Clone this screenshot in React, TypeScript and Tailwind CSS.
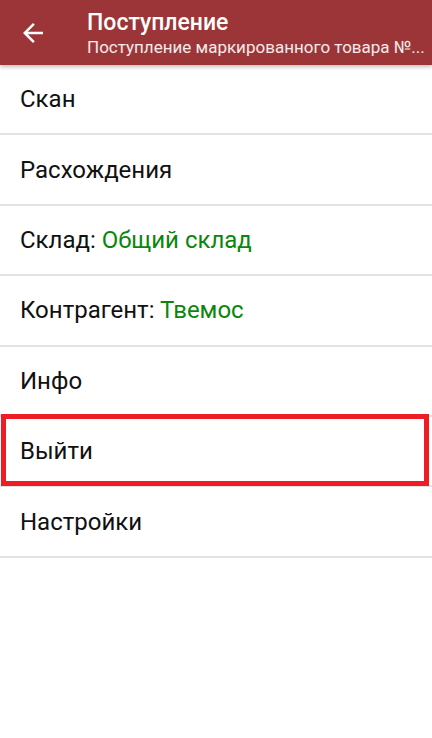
import React from 'react';

type Item = { label: string; value?: string; highlight?: boolean };

const ITEMS: Item[] = [
  { label: 'Скан' },
  { label: 'Расхождения' },
  { label: 'Склад:', value: 'Общий склад' },
  { label: 'Контрагент:', value: 'Твемос' },
  { label: 'Инфо' },
  { label: 'Выйти', highlight: true },
  { label: 'Настройки' },
];

const BackArrow = () => (
  <svg width="30" height="30" viewBox="0 0 24 24" fill="white">
    <path d="M20 11H7.83l5.59-5.59L12 4l-8 8 8 8 1.41-1.41L7.83 13H20v-2z" />
  </svg>
);

export default function App() {
  return (
    <div
      className="w-[432px] h-[738px] bg-white overflow-hidden"
      style={{ fontFamily: 'Roboto, "Noto Sans", sans-serif' }}
    >
      {/* Toolbar */}
      <div className="relative z-10 h-[65px] bg-[#9c3537] flex items-center shadow-[0_2px_4px_rgba(0,0,0,0.25)]">
        <div className="w-[87px] pl-[18px] flex items-center">
          <BackArrow />
        </div>
        <div className="flex-1 min-w-0 pr-[8px] flex flex-col pt-[1px]">
          <div className="text-white text-[23px] font-medium leading-[27px] whitespace-nowrap">Поступление</div>
          <div className="text-white/90 text-[17px] leading-[22px] whitespace-nowrap">
            Поступление маркированного товара №...
          </div>
        </div>
      </div>

      {/* Menu */}
      <div className="flex flex-col">
        {ITEMS.map((it) => (
          <div key={it.label} className="relative h-[70.4px] border-b-2 border-[#e3e3e3] flex items-center pl-[20px]">
            <span className="text-[24px] text-[#111] leading-none">
              {it.label}
              {it.value && <span className="text-[#0a870a]"> {it.value}</span>}
            </span>
            {it.highlight && (
              <div className="absolute left-[1px] right-[3px] top-[-3px] bottom-[-1px] border-[5px] border-[#ee1d25]" />
            )}
          </div>
        ))}
      </div>
    </div>
  );
}
